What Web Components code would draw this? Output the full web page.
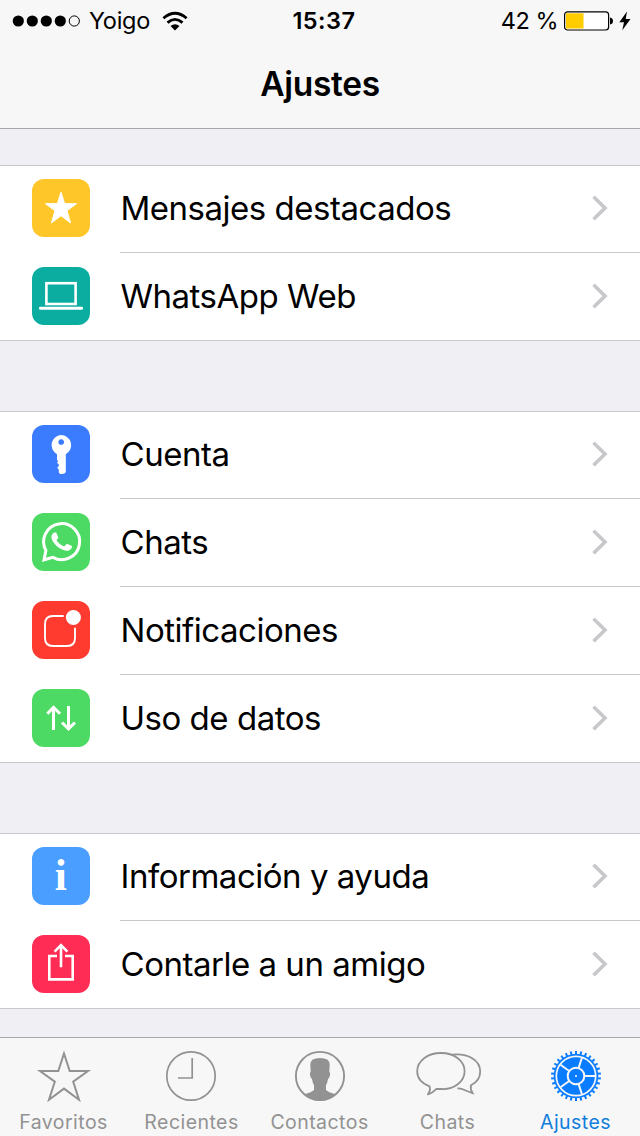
<!DOCTYPE html>
<html lang="es">
<head>
<meta charset="utf-8">
<title>Ajustes</title>
<style>
    body {
        margin: 0;
        background: #efeff4;
        font-family: Inter, "Liberation Sans", sans-serif;
        color: #000;
    }
</style>
</head>
<body>
<settings-app></settings-app>

<script>
const ICONS = {
    star: '<path fill="#fff" stroke="#fff" stroke-linejoin="round" d="M29 13.2 32.6 24.6 44.6 24.7 35 31.7 38.6 44 29 36.7 19.4 44 23 31.7 13.4 24.7 25.4 24.6Z"/>',
    laptop: '<rect x="14.4" y="16.2" width="29.2" height="20.8" fill="none" stroke="#fff" stroke-width="2.6"/><rect x="7" y="39.8" width="44" height="3" rx="1.2" fill="#fff"/>',
    key: '<path fill="#fff" fill-rule="evenodd" d="M29 10a10.2 10.2 0 0 1 4.8 19.2V46q0 3-4 3-3 0-3-2v-2.4l-1.6-1.8 1.6-1.8v-1.4L25 37.8l1.2-1.8-1.2-1V29.2A10.2 10.2 0 0 1 29 10ZM29.2 14.2a2.9 2.9 0 1 0 .01 0Z"/>',
    whatsapp: '<path fill="none" stroke="#fff" stroke-width="3" d="M12 46.8 13.9 37.4A18 18 0 1 1 20.9 44.4Z"/><path fill="#fff" transform="translate(9.2 9.2) scale(1.7 1.62)" d="M17.472 14.382c-.297-.149-1.758-.867-2.03-.967-.273-.099-.471-.148-.67.15-.197.297-.767.966-.94 1.164-.173.199-.347.223-.644.075-.297-.15-1.255-.463-2.39-1.475-.883-.788-1.48-1.761-1.653-2.059-.173-.297-.018-.458.13-.606.134-.133.298-.347.446-.52.149-.174.198-.298.298-.497.099-.198.05-.371-.025-.52-.075-.149-.669-1.612-.916-2.207-.242-.579-.487-.5-.669-.51-.173-.008-.371-.01-.57-.01-.198 0-.52.074-.792.372-.272.297-1.04 1.016-1.04 2.479 0 1.462 1.065 2.875 1.213 3.074.149.198 2.096 3.2 5.077 4.487.709.306 1.262.489 1.694.625.712.227 1.36.195 1.871.118.571-.085 1.758-.719 2.006-1.413.248-.694.248-1.289.173-1.413-.074-.124-.272-.198-.57-.347"/>',
    badge: '<path fill="none" stroke="#fff" stroke-width="1.9" d="M31.7 15H21Q13 15 13 23V37Q13 45 21 45H35Q43 45 43 37V26.7"/><circle cx="41.4" cy="16.5" r="7.5" fill="#fff"/>',
    transfer: '<path fill="none" stroke="#fff" stroke-width="3" d="M21.5 41V18M15.3 24.8 21.5 18.3 28 24.8M36.5 17V40M30 33.5 36.5 39.8 43 33.5"/>',
    info: '<text x="28.8" y="43" text-anchor="middle" font-family="Liberation Serif, serif" font-weight="700" font-size="43.5" fill="#fff">i</text>',
    share: '<path fill="none" stroke="#fff" stroke-width="2.6" d="M25 21H17.3V44.4H40.7V21H33M29 32.3V10.5M22.6 16.6 29 10.2 35.4 16.6"/>'
};

const TAB_ICONS = {
    favorites: '<path fill="none" stroke="currentColor" stroke-width="2" d="M34 3.5 39.7 21H58L43.2 31.7 49 49.7 34 38.6 19 49.7 24.8 31.7 10 21H28.3Z"/>',
    recents: '<circle cx="33" cy="26" r="24.2" fill="none" stroke="currentColor" stroke-width="1.7"/><path fill="none" stroke="currentColor" stroke-width="1.7" d="M34.2 8V28H20"/>',
    contacts: '<circle cx="34" cy="26" r="24.1" fill="none" stroke="currentColor" stroke-width="1.9"/><path fill="currentColor" d="M24.3 14Q24.5 8 34 8T43.7 14L43.3 22Q44.6 22 43.8 26 43 28.5 42 29 41.5 33 40 35V40Q42 42 50 44.5A24 24 0 0 1 18 44.5Q26 42 28 40V35Q26.5 33 26 29 25 28.5 24.2 26 23.4 22 24.7 22Z"/>',
    chats: '<path fill="none" stroke="currentColor" stroke-width="1.8" d="M15.5 36.3C7.5 33.3 3.2 27.8 3.2 21.3 3.2 11 13.7 3 27 3S50.6 11 50.6 21.3 40 39.6 27.8 39Q24.5 39 22.5 38.8 18.5 43 13.5 44.6 17 41 15.5 36.3ZM38.5 4.7C54 3 66.2 10.5 66.2 21.5 66.2 28 62 32.8 57 35.2 56 39.5 58.5 43 58.5 43 52 41.5 48.5 37.8 43.5 38.5 41 38 38 37.2"/>'
};

// The gear is generated: a toothed rim, five slices and the hub.
function gearIcon() {
    let teeth = '';
    for (let i = 0; i < 30; i++) {
        teeth += `<path stroke="currentColor" stroke-width="2" d="M34 1V5" transform="rotate(${i * 12} 34 26)"/>`;
    }
    let spokes = '';
    for (let i = 0; i < 5; i++) {
        spokes += `<path stroke="#f7f7f7" stroke-width="2" d="M42 26H54" transform="rotate(${i * 72} 34 26)"/>`;
    }
    return `${teeth}
        <circle cx="34" cy="26" r="22.3" fill="currentColor"/>
        <circle cx="34" cy="26" r="19.7" fill="none" stroke="#f7f7f7" stroke-width="1.7"/>
        ${spokes}
        <circle cx="34" cy="26" r="8.3" fill="none" stroke="#f7f7f7" stroke-width="2"/>
        <circle cx="34" cy="26" r="1" fill="#f7f7f7"/>`;
}
TAB_ICONS.settings = gearIcon();

class StatusBar extends HTMLElement {
    constructor() {
        super();
        this.attachShadow({ mode: 'open' });
        this.shadowRoot.innerHTML = `
            <style>
                :host {
                    display: grid;
                    grid-template-columns: 1fr auto 1fr;
                    align-items: center;
                    height: 41px;
                    padding: 0 9px 0 12px;
                    font-size: 23.5px;
                    line-height: 41px;
                    white-space: nowrap;
                }
                .side { display: flex; align-items: center; }
                .right { justify-content: flex-end; }
                svg { display: block; flex: none; }
                .carrier { margin: 0 12px 0 8px; letter-spacing: -0.3px; }
                .time { padding-left: 5px; font-weight: 600; letter-spacing: 0.5px; }
                .level { margin-right: 6px; letter-spacing: -0.5px; }
                .battery { margin-right: 5px; }
            </style>
            <div class="side">
                <svg width="69" height="12" viewBox="0 0 69 12">
                    <circle cx="6.3" cy="6" r="5.6"/><circle cx="20.3" cy="6" r="5.6"/>
                    <circle cx="34.3" cy="6" r="5.6"/><circle cx="48.3" cy="6" r="5.6"/>
                    <circle cx="62.3" cy="6" r="5.1" fill="none" stroke="#000"/>
                </svg>
                <span class="carrier">Yoigo</span>
                <svg width="26" height="20" viewBox="0 0 26 20">
                    <path fill="none" stroke="#000" stroke-width="2.8" d="M1.4 7.2Q13-2.8 24.6 7.2M5.5 11.6Q13 5.2 20.5 11.6"/>
                    <path d="M8.5 15Q13 11.3 17.5 15L13 19.5Z"/>
                </svg>
            </div>
            <span class="time">15:37</span>
            <div class="side right">
                <span class="level">42 %</span>
                <svg class="battery" width="50" height="20" viewBox="0 0 50 20">
                    <rect x=".6" y=".8" width="44" height="18.2" rx="3" fill="#fff" stroke="#000" stroke-width="1.2"/>
                    <rect x="2" y="2.3" width="17.5" height="15.2" fill="#fc0"/>
                    <path d="M46 6.5Q49 7 49 10T46 13.5Z"/>
                </svg>
                <svg width="12" height="20" viewBox="0 0 12 20">
                    <path d="M8 .5.3 11.3H5L3.3 19.2 11.5 8H6.7Z"/>
                </svg>
            </div>
        `;
    }
}
customElements.define('status-bar', StatusBar);

class NavBar extends HTMLElement {
    constructor() {
        super();
        this.attachShadow({ mode: 'open' });
        this.shadowRoot.innerHTML = `
            <style>
                :host {
                    display: block;
                    box-sizing: border-box;
                    height: 129px;
                    background: #f7f7f7;
                    border-bottom: 1px solid #a7a7ab;
                }
                h1 {
                    margin: 0;
                    font-size: 33.5px;
                    font-weight: 600;
                    line-height: 87px;
                    letter-spacing: -0.3px;
                    text-align: center;
                }
            </style>
            <status-bar></status-bar>
            <h1><slot></slot></h1>
        `;
    }
}
customElements.define('nav-bar', NavBar);

class SettingsGroup extends HTMLElement {
    constructor() {
        super();
        this.attachShadow({ mode: 'open' });
        this.shadowRoot.innerHTML = `
            <style>
                :host {
                    display: block;
                    background: #fff;
                    box-shadow: inset 0 1px #c8c7cc, inset 0 -1px #c8c7cc;
                }
            </style>
            <slot></slot>
        `;
    }
}
customElements.define('settings-group', SettingsGroup);

class SettingsRow extends HTMLElement {
    constructor() {
        super();
        this.attachShadow({ mode: 'open' });
        this.shadowRoot.innerHTML = `
            <style>
                :host {
                    display: flex;
                    height: 88px;
                    padding-left: 32px;
                }
                .tile {
                    flex: none;
                    width: 58px;
                    height: 58px;
                    margin: 14px 30px 0 0;
                    border-radius: 12px;
                    background: var(--tile);
                }
                .body {
                    flex: 1;
                    display: flex;
                    align-items: center;
                    justify-content: space-between;
                    box-sizing: border-box;
                    padding: 0 32px 2px 0.5px;
                    border-bottom: 1px solid #c8c7cc;
                }
                .label {
                    font-size: 33px;
                    line-height: 40px;
                    letter-spacing: -0.48px;
                    white-space: nowrap;
                }
                svg { display: block; }
            </style>
            <svg class="tile" viewBox="0 0 58 58">${ICONS[this.getAttribute('icon')]}</svg>
            <div class="body">
                <span class="label"><slot></slot></span>
                <svg width="17" height="26" viewBox="0 0 17 26">
                    <path fill="none" stroke="#c7c7cc" stroke-width="3.6" d="M2.5 1.8 14 13 2.5 24.2"/>
                </svg>
            </div>
        `;
    }
}
customElements.define('settings-row', SettingsRow);

class TabItem extends HTMLElement {
    constructor() {
        super();
        this.attachShadow({ mode: 'open' });
        this.shadowRoot.innerHTML = `
            <style>
                :host {
                    display: flex;
                    flex-direction: column;
                    align-items: center;
                    padding-top: 12px;
                    color: #929292;
                    font-size: 19.5px;
                    line-height: 24px;
                    letter-spacing: 0.45px;
                }
                :host([active]) { color: #117edd; }
                :host([active]) svg { color: #0a7cff; }
                svg { display: block; margin-bottom: 8px; }
                span { padding-right: 1px; }
            </style>
            <svg width="68" height="52" viewBox="0 0 68 52">${TAB_ICONS[this.getAttribute('icon')]}</svg>
            <span><slot></slot></span>
        `;
    }
}
customElements.define('tab-item', TabItem);

class TabBar extends HTMLElement {
    constructor() {
        super();
        this.attachShadow({ mode: 'open' });
        this.shadowRoot.innerHTML = `
            <style>
                :host {
                    display: grid;
                    grid-template-columns: repeat(5, 1fr);
                    box-sizing: border-box;
                    height: 99px;
                    background: #f7f7f7;
                    border-top: 1px solid #a7a7ab;
                }
            </style>
            <slot></slot>
        `;
    }
}
customElements.define('tab-bar', TabBar);

class SettingsApp extends HTMLElement {
    constructor() {
        super();
        this.attachShadow({ mode: 'open' });
        this.shadowRoot.innerHTML = `
            <style>
                :host {
                    display: flex;
                    flex-direction: column;
                    width: 640px;
                    height: 1136px;
                    overflow: hidden;
                }
                main {
                    flex: 1;
                    display: flex;
                    flex-direction: column;
                    gap: 70px;
                    padding-top: 36px;
                }
            </style>
            <nav-bar>Ajustes</nav-bar>
            <main>
                <settings-group>
                    <settings-row icon="star" style="--tile: #ffc629">Mensajes destacados</settings-row>
                    <settings-row icon="laptop" style="--tile: #0aad9f">WhatsApp Web</settings-row>
                </settings-group>
                <settings-group>
                    <settings-row icon="key" style="--tile: #3b7bfe">Cuenta</settings-row>
                    <settings-row icon="whatsapp" style="--tile: #4cd964">Chats</settings-row>
                    <settings-row icon="badge" style="--tile: #ff3b30">Notificaciones</settings-row>
                    <settings-row icon="transfer" style="--tile: #4cd964">Uso de datos</settings-row>
                </settings-group>
                <settings-group>
                    <settings-row icon="info" style="--tile: #4a9eff">Información y ayuda</settings-row>
                    <settings-row icon="share" style="--tile: #ff2d55">Contarle a un amigo</settings-row>
                </settings-group>
            </main>
            <tab-bar>
                <tab-item icon="favorites">Favoritos</tab-item>
                <tab-item icon="recents">Recientes</tab-item>
                <tab-item icon="contacts">Contactos</tab-item>
                <tab-item icon="chats">Chats</tab-item>
                <tab-item icon="settings" active>Ajustes</tab-item>
            </tab-bar>
        `;
    }
}
customElements.define('settings-app', SettingsApp);
</script>
</body>
</html>
